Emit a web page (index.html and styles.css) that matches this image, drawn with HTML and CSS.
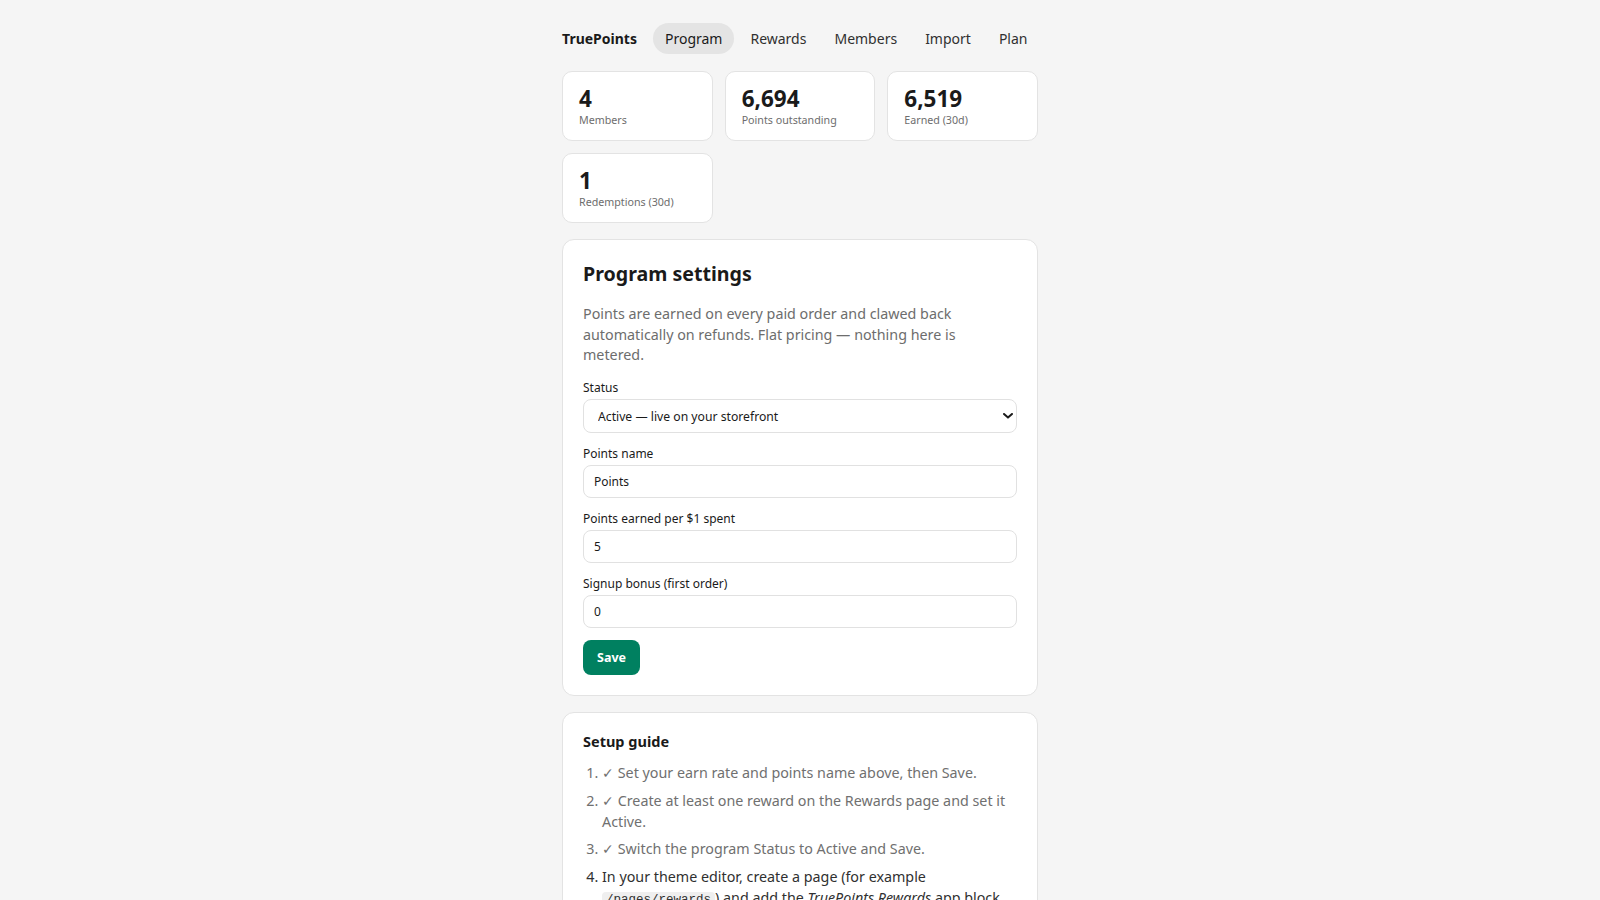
FILE: index.html
```html
<!DOCTYPE html>
<html lang="en">
<head>
<meta charset="utf-8">
<title>TruePoints — Program</title>
<link rel="stylesheet" href="styles.css">
</head>
<body>
<div class="page">
  <nav class="nav">
    <span class="brand">TruePoints</span>
    <a class="nav-link is-active" href="#">Program</a>
    <a class="nav-link" href="#">Rewards</a>
    <a class="nav-link" href="#">Members</a>
    <a class="nav-link" href="#">Import</a>
    <a class="nav-link" href="#">Plan</a>
  </nav>

  <section class="stats">
    <div class="stat"><div class="stat-value">4</div><div class="stat-label">Members</div></div>
    <div class="stat"><div class="stat-value">6,694</div><div class="stat-label">Points outstanding</div></div>
    <div class="stat"><div class="stat-value">6,519</div><div class="stat-label">Earned (30d)</div></div>
    <div class="stat"><div class="stat-value">1</div><div class="stat-label">Redemptions (30d)</div></div>
  </section>

  <section class="card">
    <h2 class="card-title">Program settings</h2>
    <p class="card-desc">Points are earned on every paid order and clawed back automatically on refunds. Flat pricing — nothing here is metered.</p>
    <form class="form">
      <div class="field">
        <label class="field-label" for="status">Status</label>
        <div class="select-wrap">
          <select id="status" class="select">
            <option>Active — live on your storefront</option>
            <option>Paused</option>
          </select>
          <svg class="select-chevron" width="10" height="6" viewBox="0 0 10 6" aria-hidden="true"><path d="M1 1l4 3.6L9 1" fill="none" stroke="#1a1a1a" stroke-width="2" stroke-linecap="round" stroke-linejoin="round"/></svg>
        </div>
      </div>
      <div class="field">
        <label class="field-label" for="pname">Points name</label>
        <input id="pname" class="input" type="text" value="Points">
      </div>
      <div class="field">
        <label class="field-label" for="rate">Points earned per $1 spent</label>
        <input id="rate" class="input" type="text" value="5">
      </div>
      <div class="field">
        <label class="field-label" for="bonus">Signup bonus (first order)</label>
        <input id="bonus" class="input" type="text" value="0">
      </div>
      <button class="btn-primary" type="button">Save</button>
    </form>
  </section>

  <section class="card card-guide">
    <h3 class="guide-title">Setup guide</h3>
    <ol class="guide">
      <li class="is-done">✓ Set your earn rate and points name above, then Save.</li>
      <li class="is-done">✓ Create at least one reward on the Rewards page and set it Active.</li>
      <li class="is-done">✓ Switch the program Status to Active and Save.</li>
      <li>In your theme editor, create a page (for example <code>/pages/rewards</code>) and add the <em>TruePoints Rewards</em> app block to it.</li>
    </ol>
  </section>
</div>
</body>
</html>
```

FILE: styles.css
```css
* { box-sizing: border-box; }

body {
  margin: 0;
  background: #f5f5f5;
  color: #1a1a1a;
  font-family: "Noto Sans", "Open Sans", sans-serif;
}

.page {
  width: 476px;
  margin: 0 auto;
  padding: 23px 0 40px;
}

/* top navigation */
.nav {
  display: flex;
  align-items: center;
  gap: 4px;
  margin-bottom: 17px;
}
.brand {
  font-weight: 700;
  font-size: 14px;
  margin-right: 12px;
  color: #1a1a1a;
}
.nav-link {
  font-size: 14px;
  line-height: 19px;
  padding: 6px 12px;
  border-radius: 999px;
  color: #303030;
  text-decoration: none;
}
.nav-link.is-active {
  background: #e4e4e4;
  color: #1a1a1a;
}

/* stat tiles */
.stats {
  display: grid;
  grid-template-columns: repeat(auto-fill, minmax(140px, 1fr));
  gap: 12px;
  margin-bottom: 16px;
}
.stat {
  background: #fff;
  border: 1px solid #e3e3e3;
  border-radius: 10px;
  padding: 13px 16px;
}
.stat-value {
  font-size: 22.5px;
  font-weight: 700;
  line-height: 27px;
}
.stat-label {
  margin-top: 1px;
  font-size: 10.7px;
  line-height: 14px;
  color: #6d6d6d;
}

/* cards */
.card {
  background: #fff;
  border: 1px solid #e3e3e3;
  border-radius: 12px;
  padding: 20px;
  margin-bottom: 16px;
}
.card-title {
  margin: 0 0 16px;
  font-size: 19.6px;
  line-height: 28px;
  font-weight: 700;
}
.card-desc {
  margin: 0 0 13px;
  font-size: 14.3px;
  line-height: 20.7px;
  color: #6d6d6d;
}

/* form */
.field {
  margin-bottom: 12px;
}
.field-label {
  display: block;
  margin-bottom: 3px;
  font-size: 12px;
  line-height: 17px;
  color: #1a1a1a;
}
.input,
.select {
  display: block;
  width: 100%;
  height: 33px;
  border: 1px solid #e1e1e1;
  border-radius: 8px;
  background: #fff;
  font: inherit;
  font-size: 12px;
  color: #1a1a1a;
  padding: 0 10px;
}
.select-wrap {
  position: relative;
}
.select {
  height: 34px;
  padding: 0 30px 0 14px;
  font-size: 12.2px;
  appearance: none;
  -webkit-appearance: none;
}
.select-chevron {
  position: absolute;
  right: 4px;
  top: 14px;
  pointer-events: none;
}
.btn-primary {
  height: 35px;
  padding: 0 14px;
  border: 0;
  border-radius: 8px;
  background: #008060;
  color: #fff;
  font: inherit;
  font-size: 12.5px;
  font-weight: 700;
}

/* setup guide */
.card-guide {
  padding-top: 20px;
}
.guide-title {
  margin: 0 0 14px;
  font-size: 14.5px;
  line-height: 16px;
  font-weight: 700;
}
.guide {
  margin: 0;
  padding-left: 19px;
  font-size: 14.3px;
  line-height: 20.7px;
  color: #303030;
}
.guide li {
  margin-bottom: 7px;
}
.guide li.is-done {
  color: #707070;
}
.guide code {
  font-family: "Liberation Mono", monospace;
  font-size: 12.5px;
  line-height: 1;
  background: #efefef;
  border-radius: 4px;
  padding: 1px 4px;
}
```
